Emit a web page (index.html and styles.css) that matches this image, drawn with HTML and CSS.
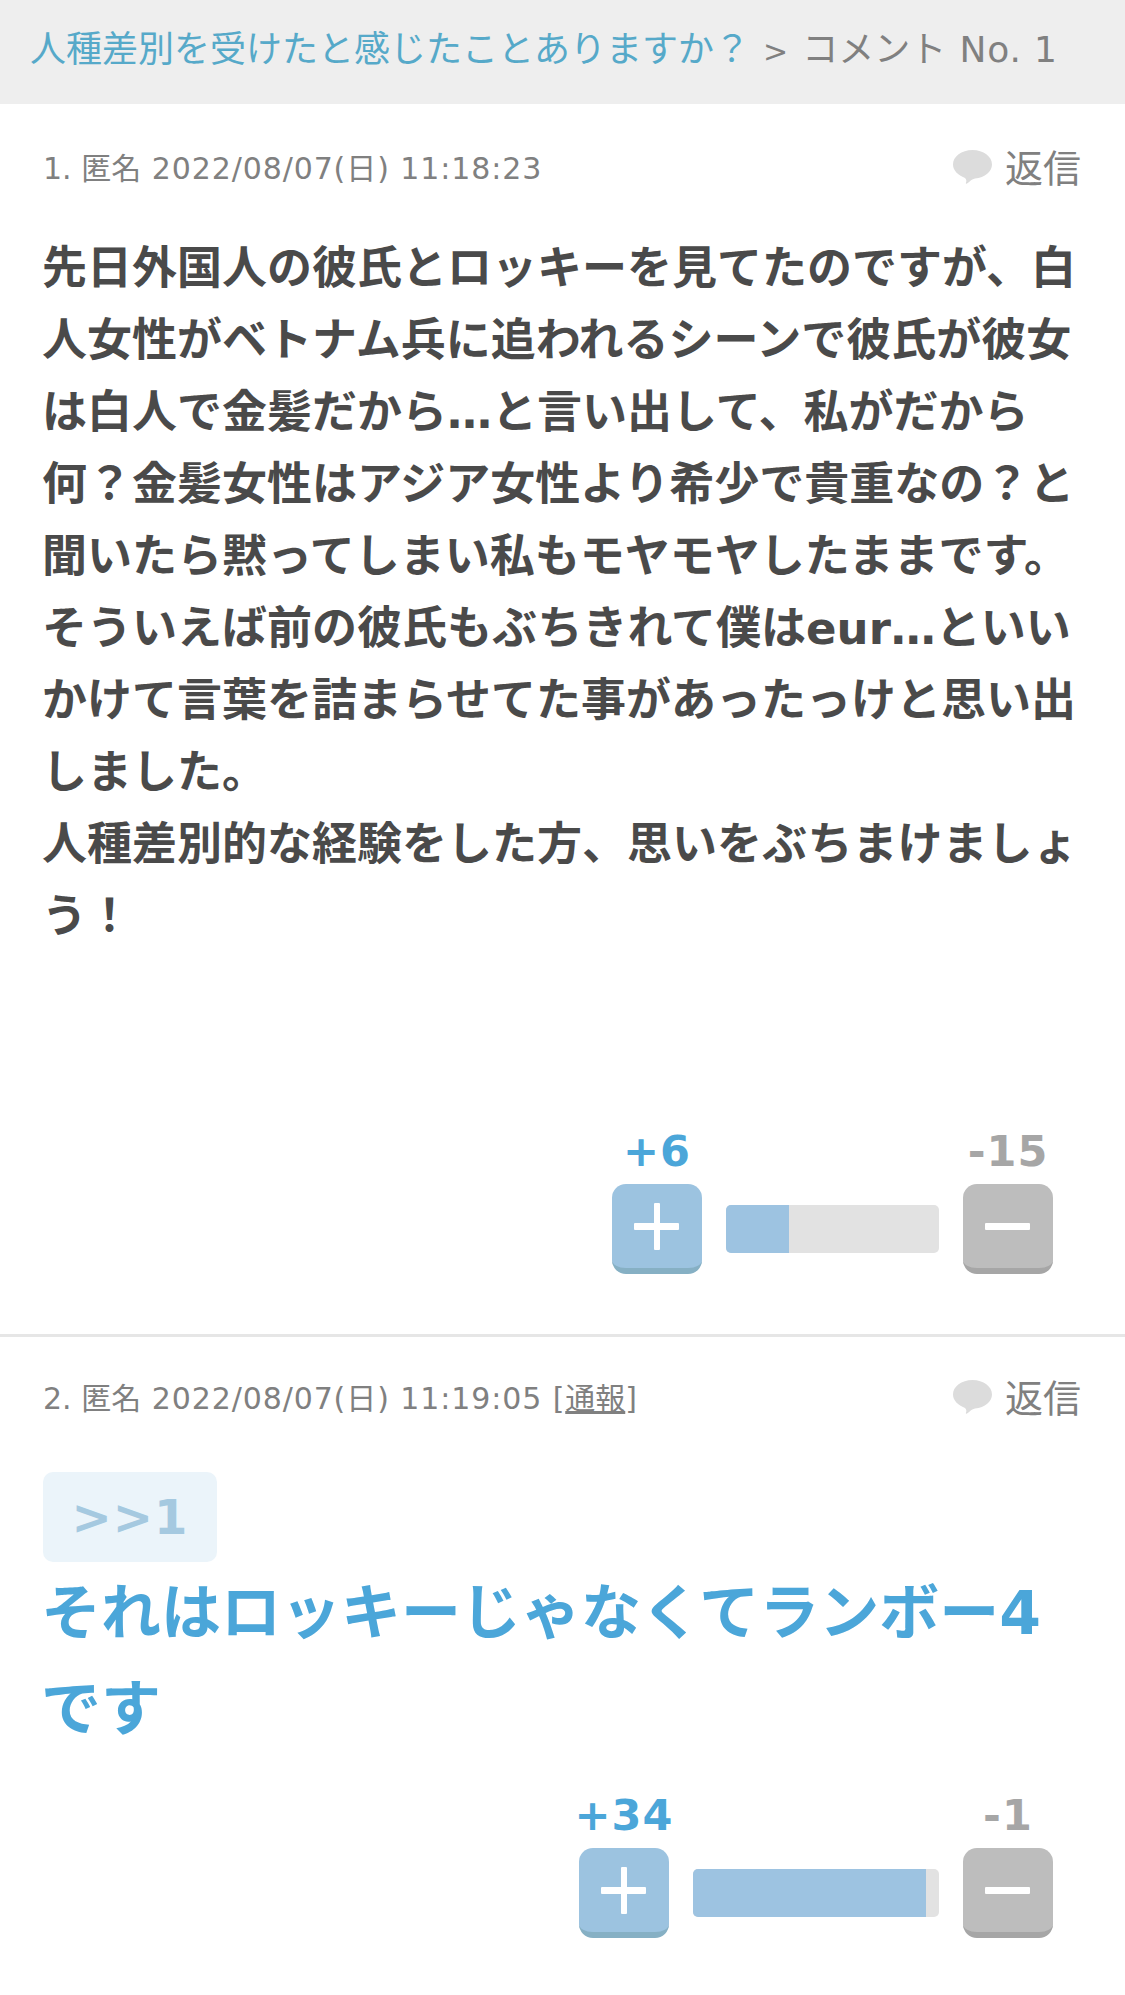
FILE: index.html
```html
<!DOCTYPE html>
<html lang="ja">
<head>
<meta charset="utf-8">
<title>コメント No. 1</title>
<link rel="stylesheet" href="styles.css">
</head>
<body>
<nav class="crumb"><a class="crumb-link">人種差別を受けたと感じたことありますか？</a><span class="crumb-sep">&gt;</span><span>コメント <span class="lat">No. 1</span></span></nav>
<article class="post post-first">
  <header class="meta">
    <div class="meta-info">1. 匿名 <span class="lat">2022/08/07(</span>日<span class="lat">) 11:18:23</span></div>
    <div class="reply"><svg class="bubble" viewBox="0 0 39 34"><path d="M19.5 0C30.5 0 39 6.500 39 14.500c0 7-7 13-17 14-3 .3-5 3-8 5-1 .5-1.500 0-1-1 .6-1.500.6-3-1-4.500C5 25 0 20.500 0 14.500 0 6.500 8.500 0 19.500 0z"/></svg><span>返信</span></div>
  </header>
  <p class="body">先日外国人の彼氏とロッキーを見てたのですが、白人女性がベトナム兵に追われるシーンで彼氏が彼女は白人で金髪だから…と言い出して、私がだから何？金髪女性はアジア女性より希少で貴重なの？と聞いたら黙ってしまい私もモヤモヤしたままです。<br>そういえば前の彼氏もぶちきれて僕はeur…といいかけて言葉を詰まらせてた事があったっけと思い出しました。<br>人種差別的な経験をした方、思いをぶちまけましょう！</p>
  <div class="vote">
    <div class="vote-side"><div class="count count-plus">+6</div><div class="btn btn-plus"><span class="bar-h"></span><span class="bar-v"></span></div></div>
    <div class="meter" style="width:213px"><div class="meter-fill" style="width:63px"></div></div>
    <div class="vote-side"><div class="count count-minus">-15</div><div class="btn btn-minus"><span class="bar-h"></span></div></div>
  </div>
</article>
<article class="post post-second">
  <header class="meta">
    <div class="meta-info">2. 匿名 <span class="lat">2022/08/07(</span>日<span class="lat">) 11:19:05 [</span><u>通報</u>]</div>
    <div class="reply"><svg class="bubble" viewBox="0 0 39 34"><path d="M19.5 0C30.5 0 39 6.500 39 14.500c0 7-7 13-17 14-3 .3-5 3-8 5-1 .5-1.500 0-1-1 .6-1.500.6-3-1-4.500C5 25 0 20.500 0 14.500 0 6.500 8.500 0 19.500 0z"/></svg><span>返信</span></div>
  </header>
  <div class="anchor">&gt;&gt;1</div>
  <p class="body-big">それはロッキーじゃなくてランボー4です</p>
  <div class="vote vote-tight">
    <div class="vote-side"><div class="count count-plus">+34</div><div class="btn btn-plus"><span class="bar-h"></span><span class="bar-v"></span></div></div>
    <div class="meter" style="width:246px"><div class="meter-fill" style="width:233px"></div></div>
    <div class="vote-side"><div class="count count-minus">-1</div><div class="btn btn-minus"><span class="bar-h"></span></div></div>
  </div>
</article>
</body>
</html>
```
FILE: styles.css
```css
* { box-sizing: border-box; }
html, body { margin: 0; padding: 0; background: #fff; }
body {
  width: 1125px;
  height: 1995px;
  overflow: hidden;
  font-family: "DejaVu Sans", "Noto Sans CJK JP", sans-serif;
  color: #4a4a4a;
}
.crumb {
  height: 104px;
  background: #eeeeee;
  padding: 26px 0 0 30px;
  font-size: 36px;
  line-height: 48px;
  color: #808080;
  white-space: nowrap;
}
.crumb .lat { letter-spacing: 0.8px; margin-left: 2px; }
.crumb-link { color: #56a9c9; }
.crumb-sep { font-size: 30px; margin: 0 14px 0 13px; }
.post { padding: 0 44px 0 43px; }
.post-first { border-bottom: 3px solid #e6e6e6; height: 1233px; }
.meta {
  display: flex;
  justify-content: space-between;
  align-items: center;
  color: #808080;
  padding-top: 41px;
  height: 88px;
}
.post-second .meta { padding-top: 39px; height: 84px; }
.meta-info { font-size: 30px; line-height: 48px; }
.meta-info .lat { letter-spacing: 0.9px; margin-left: 1px; }
.meta-info u { text-underline-offset: 2px; }
.reply { display: flex; align-items: center; font-size: 38px; line-height: 48px; gap: 13px; }
.bubble { width: 39px; height: 34px; fill: #dcdcdc; display: block; margin: -4px 0 0 1px; }
.body {
  margin: 41px 0 0 -1px;
  font-size: 45px;
  line-height: 72px;
  font-weight: 700;
  color: #4a4a4a;
}
.vote {
  display: flex;
  justify-content: flex-end;
  align-items: flex-end;
  gap: 24px;
  margin-right: 28px;
  margin-top: 173px;
}
.vote-side { width: 90px; display: flex; flex-direction: column; align-items: center; }
.count { font-size: 43px; line-height: 50px; font-weight: 700; letter-spacing: 1px; white-space: nowrap; margin-bottom: 8px; }
.count-plus { color: #4ba6d9; }
.count-minus { color: #a6a6a6; }
.btn {
  position: relative;
  width: 90px;
  height: 90px;
  border-radius: 14px;
}
.btn-plus { background: #9cc3e0; border-bottom: 6px solid #86b0c4; }
.btn-minus { background: #bdbdbd; border-bottom: 6px solid #a6a6a6; }
.bar-h, .bar-v { position: absolute; background: #fff; border-radius: 1px; }
.bar-h { left: 22px; top: 39px; width: 45px; height: 7px; }
.bar-v { left: 42px; top: 19px; width: 6px; height: 47px; }
.meter {
  height: 48px;
  background: #e2e2e2;
  border-radius: 5px;
  overflow: hidden;
  margin-bottom: 21px;
}
.meter-fill { height: 100%; background: #9dc3e1; }
.anchor {
  margin-top: 51px;
  width: 174px;
  height: 90px;
  border-radius: 10px;
  background: #ebf4fa;
  color: #a5c9e0;
  font-size: 48px;
  font-weight: 700;
  letter-spacing: 1px;
  line-height: 90px;
  text-align: center;
}
.body-big {
  margin: 3px 0 0 -2px;
  font-size: 60px;
  line-height: 96px;
  font-weight: 700;
  color: #4ba6d9;
}
.vote-tight { margin-top: 33px; }
```
